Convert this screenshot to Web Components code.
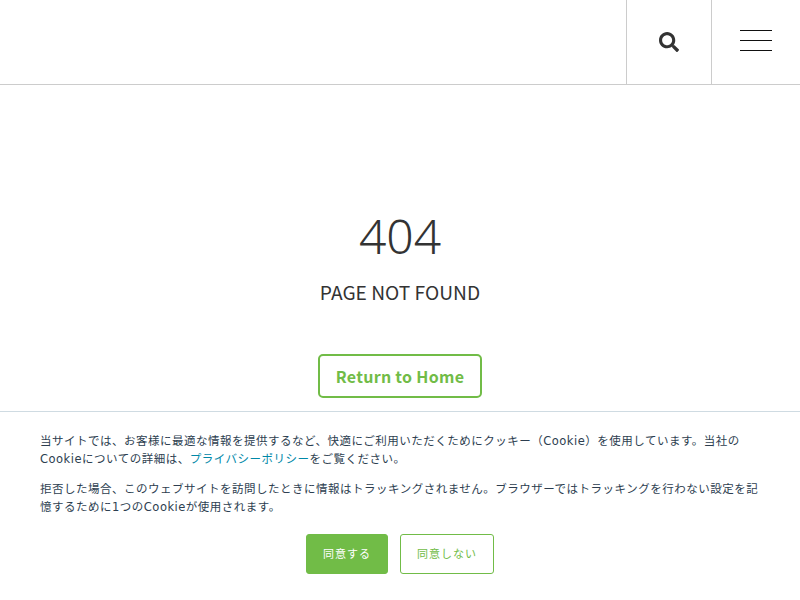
<!DOCTYPE html>
<html lang="ja">
<head>
<meta charset="utf-8">
<title>404</title>
<style>
html, body { margin: 0; height: 100%; background: #fff; }
body { font-family: "Noto Sans CJK JP", sans-serif; color: #333; overflow: hidden; }
cookie-bar a { color: #0088a8; text-decoration: none; }
</style>
</head>
<body>
<site-header></site-header>
<not-found></not-found>
<cookie-bar>
    <p>当サイトでは、お客様に最適な情報を提供するなど、快適にご利用いただくためにクッキー（Cookie）を使用しています。当社のCookieについての詳細は、<a href="#">プライバシーポリシー</a>をご覧ください。</p>
    <p>拒否した場合、このウェブサイトを訪問したときに情報はトラッキングされません。ブラウザーではトラッキングを行わない設定を記憶するために1つのCookieが使用されます。</p>
</cookie-bar>
<script>
class SiteHeader extends HTMLElement {
    constructor() {
        super();
        const shadow = this.attachShadow({ mode: "open" });
        shadow.innerHTML = `
        <style>
        :host { display: flex; justify-content: flex-end; height: 84px; border-bottom: 1px solid #ccc; }
        .cell { display: flex; align-items: center; justify-content: center; box-sizing: border-box; height: 84px; border-left: 1px solid #ccc; }
        .search { width: 85px; padding-right: 1px; }
        .menu { width: 89px; padding: 0 1px 4px 0; }
        .bars { display: flex; flex-direction: column; gap: 9px; width: 32px; }
        .bars span { height: 1px; background: #111; }
        svg { display: block; }
        </style>
        <div class="cell search">
            <svg width="20" height="20" viewBox="0 0 512 512">
                <path fill="#333" d="M505 442.7L405.3 343c-4.5-4.5-10.6-7-17-7H372c27.6-35.3 44-79.7 44-128C416 93.1 322.9 0 208 0S0 93.1 0 208s93.1 208 208 208c48.3 0 92.7-16.4 128-44v16.3c0 6.4 2.5 12.5 7 17l99.7 99.7c9.4 9.4 24.6 9.4 33.9 0l28.3-28.3c9.4-9.4 9.4-24.6.1-34zM208 336c-70.7 0-128-57.2-128-128 0-70.7 57.2-128 128-128 70.7 0 128 57.2 128 128 0 70.7-57.2 128-128 128z"/>
            </svg>
        </div>
        <div class="cell menu"><div class="bars"><span></span><span></span><span></span></div></div>
        `;
    }
}

class NotFound extends HTMLElement {
    constructor() {
        super();
        const shadow = this.attachShadow({ mode: "open" });
        shadow.innerHTML = `
        <style>
        :host { display: flex; flex-direction: column; align-items: center; padding-top: 115px; color: #333; }
        h1 { margin: 0; font-family: "Noto Sans", sans-serif; font-size: 48px; font-weight: 350; line-height: 72px; }
        p { margin: 2px 0 0; font-size: 19.2px; line-height: 36px; }
        a {
            display: block; box-sizing: border-box; width: 164px; height: 44px; margin-top: 44px;
            border: 2px solid #71bc47; border-radius: 5px;
            color: #71bc47; font-size: 16px; font-weight: 700; line-height: 40px; letter-spacing: 0.28px; text-align: center; text-decoration: none;
        }
        </style>
        <h1>404</h1>
        <p>PAGE NOT FOUND</p>
        <a href="#">Return to Home</a>
        `;
    }
}

class CookieBar extends HTMLElement {
    constructor() {
        super();
        const shadow = this.attachShadow({ mode: "open" });
        shadow.innerHTML = `
        <style>
        :host {
            position: fixed; left: 0; right: 0; bottom: 0; box-sizing: border-box; height: 189px;
            padding: 20px 40px 0; background: #fff; border-top: 1px solid #cfdbe2;
            font-family: "DejaVu Sans", "Noto Sans CJK JP", sans-serif;
            font-size: 11.5px; letter-spacing: 0.5px; line-height: 18px; color: #2d3e50;
        }
        ::slotted(p) { margin: 0 0 12px; }
        .actions { display: flex; justify-content: center; gap: 12px; margin-top: 18px; }
        button {
            box-sizing: border-box; height: 40px; padding: 1px 0 0; border: 1px solid #71bc47; border-radius: 3px;
            font: inherit; font-size: 11px; letter-spacing: 1px; cursor: pointer;
        }
        .yes { width: 82px; background: #71bc47; color: #fff; }
        .no { width: 94px; background: #fff; color: #71bc47; }
        </style>
        <slot></slot>
        <div class="actions">
            <button class="yes">同意する</button>
            <button class="no">同意しない</button>
        </div>
        `;
    }
}

window.customElements.define("site-header", SiteHeader);
window.customElements.define("not-found", NotFound);
window.customElements.define("cookie-bar", CookieBar);
</script>
</body>
</html>
